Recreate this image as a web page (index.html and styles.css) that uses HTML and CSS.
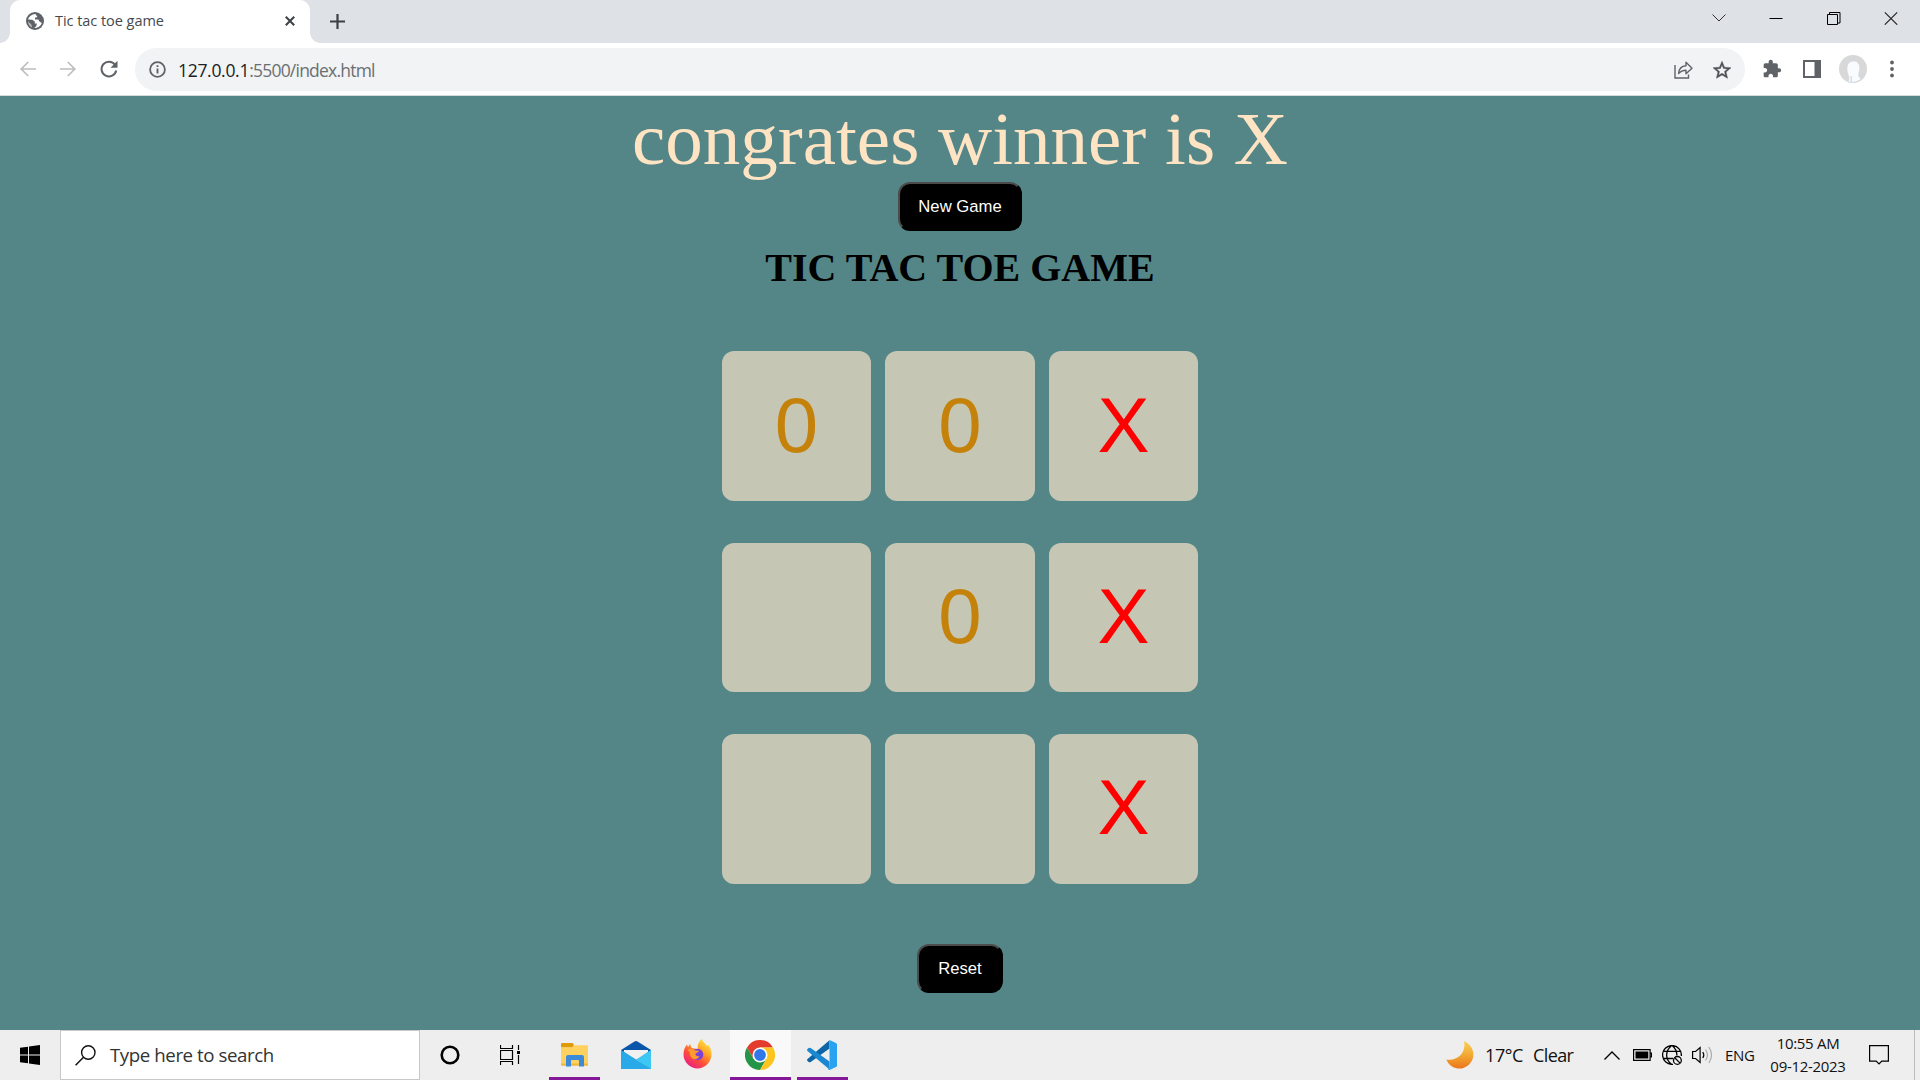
FILE: index.html
```
<!DOCTYPE html>
<html lang="en">
<head>
<meta charset="utf-8">
<title>Tic tac toe game</title>
<link rel="stylesheet" href="styles.css">
</head>
<body>
<header class="browser">
  <div class="tabstrip">
    <div class="tab">
      <svg class="globe" width="18" height="18" viewBox="0 0 18 18"><circle cx="9" cy="9" r="9" fill="#5f6368"/><path d="M9.5 1.9C5.5 2.2 2.8 4.600 2.100 7.600L6.200 7.700 8.800 9.600 8.800 11.400 10.800 11.400 10.300 14.200 8.200 16C12 16.200 14.800 13.800 15.800 11L13.400 9.600 12.300 7.600 9 7.500 8.900 5.800 11.400 4.900Z" fill="#fff"/><path d="M2 9.500L5.200 12.300 6.200 15.600C3.700 14.600 2.100 12.400 2 9.500Z" fill="#fff" opacity=".55"/></svg>
      <span class="tab-title">Tic tac toe game</span>
      <svg class="tab-close" width="10" height="10" viewBox="0 0 10 10"><path d="M.8.8l8.400 8.400M9.200.8L.8 9.200" stroke="#3c4043" stroke-width="2"/></svg>
    </div>
    <svg class="newtab" width="15" height="15" viewBox="0 0 15 15"><path d="M7.500 0v15M0 7.500h15" stroke="#3c4043" stroke-width="2.200"/></svg>
    <div class="window-controls">
      <svg width="14" height="14" viewBox="0 0 14 14"><path d="M.5 3.500l6.500 6.500 6.500-6.500" fill="none" stroke="#333"/></svg>
      <svg width="14" height="14" viewBox="0 0 14 14"><path d="M.5 7.500h13" stroke="#000"/></svg>
      <svg width="14" height="14" viewBox="0 0 14 14"><path d="M.5 3.500h10v10h-10zM2.500 3V1.500h10.500v10.500h-2" fill="none" stroke="#000"/></svg>
      <svg width="14" height="14" viewBox="0 0 14 14"><path d="M.8 1.300l12.400 12.400M13.200 1.300L.8 13.700" stroke="#222" stroke-width="1.100"/></svg>
    </div>
  </div>
  <div class="toolbar">
    <nav class="nav">
      <svg width="16" height="16" viewBox="0 0 16 16"><path d="M16 8H1.500M8.200 1L1.200 8l7 7" fill="none" stroke="#bbbdbf" stroke-width="1.700"/></svg>
      <svg width="16" height="16" viewBox="0 0 16 16"><path d="M0 8h14.500M7.800 1l7 7-7 7" fill="none" stroke="#bbbdbf" stroke-width="1.700"/></svg>
      <svg width="18" height="18" viewBox="0 0 18 18"><path d="M15 4.800A7.400 7.400 0 1 0 16.200 10.500" fill="none" stroke="#5f6368" stroke-width="2"/><path d="M17.500.8v7h-7z" fill="#5f6368"/></svg>
    </nav>
    <div class="omnibox">
      <svg width="17" height="17" viewBox="0 0 17 17"><circle cx="8.500" cy="8.500" r="7.400" fill="none" stroke="#5f6368" stroke-width="1.800"/><path d="M8.500 7.400v5M8.500 4.200v1.900" stroke="#5f6368" stroke-width="1.900"/></svg>
      <span class="url"><span class="host">127.0.0.1</span>:5500/index.html</span>
      <svg class="share" width="19" height="18" viewBox="0 0 19 18"><path d="M1 4v13h13.500v-3.500" fill="none" stroke="#5f6368" stroke-width="1.400"/><path d="M4.600 12.500C5 7.500 8 5 12 4.800V1.200l6 6-6 5.500V9.200C9 9.200 6.800 10 4.600 12.500Z" fill="none" stroke="#5f6368" stroke-width="1.400" stroke-linejoin="round"/></svg>
      <svg class="star" width="18" height="18" viewBox="0 0 24 24"><path d="M22 9.240l-7.190-.62L12 2 9.190 8.630 2 9.240l5.460 4.730L5.820 21 12 17.270 18.180 21l-1.630-7.030L22 9.240zM12 15.400l-3.760 2.270 1-4.280-3.320-2.880 4.380-.38L12 6.100l1.710 4.040 4.380.38-3.320 2.880 1 4.280L12 15.400z" fill="#4d5155" stroke="#4d5155" stroke-width=".5" transform="translate(-2.400 -2.100) scale(1.200)"/></svg>
    </div>
    <div class="actions">
      <svg width="20" height="20" viewBox="0 0 24 24"><path d="M20.500 11H19V7c0-1.100-.9-2-2-2h-4V3.500C13 2.120 11.880 1 10.500 1S8 2.120 8 3.500V5H4c-1.100 0-1.990.9-1.990 2v3.800H3.500c1.490 0 2.700 1.210 2.700 2.700s-1.210 2.700-2.700 2.700H2V20c0 1.100.9 2 2 2h3.800v-1.500c0-1.490 1.210-2.700 2.700-2.700 1.490 0 2.700 1.210 2.700 2.700V22H17c1.100 0 2-.9 2-2v-4h1.500c1.380 0 2.500-1.120 2.500-2.500S21.880 11 20.500 11z" fill="#5f6368"/></svg>
      <svg width="18" height="18" viewBox="0 0 18 18"><path d="M0 0h18v18H0zM2 2v14h9.500V2z" fill="#5f6368" fill-rule="evenodd"/></svg>
      <svg width="28" height="28" viewBox="0 0 28 28"><circle cx="14" cy="14" r="14" fill="#d8d8d8"/><path d="M9 27c1.500-2 .8-5.500-.2-8C6.500 12 8.500 6 14.500 6S22 12 20 18c-.8 2.500 0 4 2 6-3 3-8 4-13 3z" fill="#f9fbfd" stroke="#c7d2dd" stroke-width=".6"/><path d="M12.200 21v6" stroke="#b9cbdc" stroke-width=".8"/></svg>
      <svg width="4" height="18" viewBox="0 0 4 18"><g fill="#5f6368"><circle cx="2" cy="2.500" r="1.900"/><circle cx="2" cy="9" r="1.900"/><circle cx="2" cy="15.500" r="1.900"/></g></svg>
    </div>
  </div>
</header>

<main class="page">
  <p class="message">congrates winner is X</p>
  <button class="btn new-game">New Game</button>
  <h1 class="heading">TIC TAC TOE GAME</h1>
  <div class="board">
    <button class="cell o">0</button><button class="cell o">0</button><button class="cell x">X</button>
    <button class="cell"></button><button class="cell o">0</button><button class="cell x">X</button>
    <button class="cell"></button><button class="cell"></button><button class="cell x">X</button>
  </div>
  <button class="btn reset">Reset</button>
</main>

<footer class="taskbar">
  <div class="start"><svg width="20" height="20" viewBox="0 0 20 20"><path d="M0 2.800l8-1.100v7.800H0zM9 1.500L20 0v9.500H9zM0 10.500h8v7.800l-8-1.100zM9 10.500h11V20L9 18.500z"/></svg></div>
  <div class="search">
    <svg width="21" height="21" viewBox="0 0 21 21"><circle cx="13.300" cy="7.500" r="6.700" fill="none" stroke="#111" stroke-width="1.400"/><path d="M8.500 12.300L.6 20.300" stroke="#111" stroke-width="1.500"/></svg>
    <span class="search-text">Type here to search</span>
  </div>
  <div class="slot cortana"><svg width="20" height="20" viewBox="0 0 20 20"><circle cx="10" cy="10" r="8.300" fill="none" stroke="#000" stroke-width="2.600"/></svg></div>
  <div class="slot taskview"><svg width="20" height="20" viewBox="0 0 20 20"><path d="M.5 5.500h12v9H.5zM.5 0v3.500h12V0M.5 20v-3.500h12V20M18.500 0v5M18.500 10v9" fill="none" stroke="#000" stroke-width="1.200"/><path d="M17 6h3v3h-3z"/></svg></div>
  <div class="app folder"><svg width="28" height="24" viewBox="0 0 28 24"><path d="M0 1q0-1 1-1h10.500l1.500 2-1.500 2.500H0z" fill="#e09a08"/><path d="M0 4.500h11L13 2.200h13q1 0 1 1V22H0z" fill="#ffd260"/><path d="M0 20.500h27V22q0 .8-1 .8H1q-1 0-1-.8z" fill="#f0b93c"/><path d="M5 23.500V14q0-2 2-2h14q2 0 2 2v9.500h-5V18q0-1-1-1h-6q-1 0-1 1v5.500z" fill="#3c8bd9"/></svg></div>
  <div class="app mail"><svg width="30" height="28" viewBox="0 0 30 28"><path d="M0 9L13.500.5q1.500-.9 3 0L30 9v3H0z" fill="#0a56aa"/><path d="M3 9h24v8H3z" fill="#f1f1f1"/><path d="M0 9l15 10L30 9v19H0z" fill="#1b91de"/><path d="M0 9l30 19H0z" fill="#2aa9e8"/><path d="M15 19L30 9v19z" fill="#3fc7f4"/></svg></div>
  <div class="app firefox"><svg width="29" height="30" viewBox="0 0 29 30"><defs><linearGradient id="fx" x1=".9" y1="0" x2=".2" y2="1"><stop offset="0" stop-color="#fff04b"/><stop offset=".35" stop-color="#ffab28"/><stop offset=".65" stop-color="#ff4f38"/><stop offset="1" stop-color="#e6198f"/></linearGradient></defs><path d="M15 10c-1-4 1-8 4-10 .5 3 3 4 5 7l1.500-1c2 3 3 6 3 9.500C28.500 23 22 29.500 14.500 29.500S.5 23 .5 15.500C.5 11 2 8 4 5.500l1 2.500 2-3 1.500 4z" fill="url(#fx)"/><circle cx="14.500" cy="15.500" r="5.800" fill="#7a42d8"/><path d="M4.500 11c3-2 5.500-1 7.500.5l4 .3c-.5 2-3 1.700-3.500 3-.4 1.500 1.500 3 4 2.200-1 3.500-6 4.500-8.500 1-1.500-2-.8-4-1.500-5z" fill="#ff9a2f"/></svg></div>
  <div class="app chrome"><svg width="30" height="30" viewBox="0 0 30 30"><path d="M2 7.500A15 15 0 0 1 28 7.500H15L8.500 18.750z" fill="#e33b2e"/><path d="M2 7.500A15 15 0 0 0 15 30L21.500 18.750H8.500z" fill="#249447"/><path d="M28 7.500A15 15 0 0 1 15 30l6.500-11.250L15 7.500z" fill="#fcc41f"/><circle cx="15" cy="15" r="7.500" fill="#fff"/><circle cx="15" cy="15" r="5.900" fill="#3177e8"/></svg></div>
  <div class="app vscode"><svg width="30" height="30" viewBox="0 0 30 30"><path d="M.5 19q-1 1 .2 2.200l1 .8q1 .6 2 0L22.500 8.500V.3z" fill="#0b65a6"/><path d="M.5 11q-1-1 .2-2.200l1-.8q1-.6 2 0L22.500 21.500v8z" fill="#1988d0"/><path d="M22.500 0L29 3q1 .5 1 1.500v21q0 1-1 1.500l-6.500 3q-1-.2-1.500-1l1.500-2z" fill="#29a3ef"/></svg></div>
  <div class="weather">
    <svg width="28" height="28" viewBox="0 0 28 28"><defs><linearGradient id="mn" x1="0" y1="0" x2="0" y2="1"><stop offset="0" stop-color="#f8cf58"/><stop offset=".5" stop-color="#f2a934"/><stop offset="1" stop-color="#ec751c"/></linearGradient></defs><path d="M18 .3A14 14 0 1 1 .3 18.500C12 20.500 20.500 11 18 .3z" fill="url(#mn)"/></svg>
    <span class="temp">17°C</span><span class="sky">Clear</span>
  </div>
  <div class="tray">
    <svg width="16" height="9" viewBox="0 0 16 9"><path d="M.5 8.500L8 1l7.500 7.500" fill="none" stroke="#000" stroke-width="1.300"/></svg>
    <svg class="battery" width="19" height="12" viewBox="0 0 19 12"><path d="M.6.6h16.500v10.800H.6zM17.500 4h1v4h-1" fill="none" stroke="#000" stroke-width="1.200"/><path d="M2.500 2.500h12.800v7H2.500z"/></svg>
    <svg class="net" width="20" height="20" viewBox="0 0 20 20"><g fill="none" stroke="#000" stroke-width="1.300"><path d="M11 19.300A9.400 9.400 0 1 1 19.300 11M1.500 6.300h17M1 13.500h10M9.500.7c-6.500 5-6.500 13.500 0 18.500M10.500.7c3 2.800 4.600 6 4.300 9.800"/><circle cx="15.400" cy="15.400" r="3.900"/><path d="M12.700 12.700l5.400 5.400"/></g></svg>
    <svg class="volume" width="21" height="18" viewBox="0 0 21 18"><path d="M.6 5.500h3l4.500-4v15l-4.500-4h-3z" fill="none" stroke="#000" stroke-width="1.200"/><path d="M10.800 6q2 3 0 6" fill="none" stroke="#000" stroke-width="1.200"/><path d="M13.500 3.500q4 5.500 0 11M16.800 1q5.500 8 0 16" fill="none" stroke="#aaa" stroke-width="1.200"/></svg>
    <span class="lang">ENG</span>
    <div class="clock"><span class="time">10:55 AM</span><span class="date">09-12-2023</span></div>
    <svg class="notify" width="20" height="20" viewBox="0 0 20 20"><path d="M.6.6h18.800v15.500h-6.600L10 19l-2.800-2.900H.6z" fill="none" stroke="#000" stroke-width="1.200"/></svg>
    <span class="desktop-edge"></span>
  </div>
</footer>
</body>
</html>
```
FILE: styles.css
```
* { box-sizing: border-box; }
body {
  margin: 0;
  width: 1920px;
  height: 1080px;
  overflow: hidden;
  display: flex;
  flex-direction: column;
  font-family: "Open Sans", "Noto Sans", sans-serif;
}
svg { display: block; flex: none; }
span { white-space: nowrap; }

/* Browser chrome */
.browser { flex: none; height: 96px; background: #fff; border-bottom: 1px solid #d5dbdc; }
.tabstrip {
  height: 43px;
  display: flex;
  align-items: center;
  background: #dee1e6;
  padding-left: 10px;
}
.tab {
  position: relative;
  width: 300px;
  height: 43px;
  padding: 0 15px 1px 16px;
  display: flex;
  align-items: center;
  background: #fff;
  border-radius: 10px 10px 0 0;
}
.tab::before, .tab::after {
  content: "";
  position: absolute;
  bottom: 0;
  width: 10px;
  height: 10px;
}
.tab::before { left: -10px; background: radial-gradient(circle at 0 0, #dee1e6 9.500px, #fff 10px); }
.tab::after { right: -10px; background: radial-gradient(circle at 100% 0, #dee1e6 9.500px, #fff 10px); }
.tab-title { margin-left: 11px; padding-bottom: 1px; font-size: 14.500px; letter-spacing: -0.040px; color: #45494d; }
.tab-close { margin-left: auto; }
.newtab { margin-left: 20px; }
.window-controls { margin-left: auto; display: flex; gap: 43.300px; padding: 0 22px 7px 0; }

.toolbar { height: 52px; display: flex; align-items: center; }
.nav { display: flex; align-items: center; gap: 24px; width: 135px; padding-left: 19.500px; }
.omnibox {
  width: 1610px;
  height: 43px;
  display: flex;
  align-items: center;
  margin-top: 1px;
  padding: 0 14px;
  border-radius: 22px;
  background: #f1f3f4;
}
.url { margin-left: 12px; font-size: 17.500px; letter-spacing: -0.780px; color: #6b6f73; }
.host { letter-spacing: -0.300px; color: #202124; }
.share { margin-left: auto; }
.star { margin-left: 20px; }
.actions { display: flex; align-items: center; padding-left: 17px; }
.actions svg:nth-child(2) { margin-left: 21px; }
.actions svg:nth-child(3) { margin-left: 18px; }
.actions svg:nth-child(4) { margin-left: 23px; }

/* Game page */
.page {
  flex: 1;
  background: #548687;
  display: flex;
  flex-direction: column;
  align-items: center;
  font-family: "Liberation Serif", "Times New Roman", serif;
}
.message { margin: 0; height: 86px; line-height: 85px; font-size: 75px; color: #ffe4c4; white-space: nowrap; }
.btn {
  flex: none;
  height: 49px;
  padding: 0 18px;
  border: 2px outset #000;
  border-color: #4c4c4c #000 #000 #4c4c4c;
  border-radius: 12px;
  background: #000;
  color: #fff;
  font: 16.670px "Liberation Sans", Arial, sans-serif;
}
.heading { margin: 14px 0 0; height: 46px; line-height: 46px; font-size: 40px; font-weight: bold; color: #000; }
.board {
  margin-top: 60.300px;
  display: grid;
  grid-template-columns: repeat(3, 149.440px);
  grid-auto-rows: 149.440px;
  gap: 42px 14px;
}
.cell {
  padding: 0 0 2px;
  border: 0;
  border-radius: 12px;
  background: #c6c6b4;
  font: 78px "Liberation Sans", Arial, sans-serif;
}
.cell.o { color: #c4820a; }
.cell.x { color: #f00; }
.reset { margin-top: 60.700px; padding: 0 18.900px; }

/* Taskbar */
.taskbar { flex: none; height: 50px; display: flex; align-items: center; background: #eee; color: #111; }
.start { width: 60px; padding-left: 20px; }
.search {
  width: 360px;
  height: 50px;
  display: flex;
  align-items: center;
  padding-left: 14px;
  border: 1px solid #c8c8c8;
  background: #fff;
}
.search-text { margin-left: 14px; padding-bottom: 2px; font-size: 18.700px; letter-spacing: -0.430px; color: #333; }
.slot { display: flex; justify-content: center; width: 60px; }
.app {
  height: 50px;
  width: 51px;
  display: flex;
  align-items: center;
  justify-content: center;
  border-bottom: 3px solid transparent;
  padding-top: 3px;
}
.folder, .chrome, .vscode { border-bottom-color: #851799; }
.folder { margin-left: 9px; padding-top: 2px; }
.mail { margin-left: 10px; }
.firefox { margin-left: 11px; padding-top: 0; }
.chrome { margin-left: 7px; width: 61px; padding-right: 1px; background: #f9f9f9; }
.vscode { margin-left: 6px; padding-right: 1px; }
.weather { margin-left: 598px; display: flex; align-items: center; font-size: 18px; }
.temp { margin-left: 11px; width: 48px; letter-spacing: -0.400px; }
.sky { width: 71px; letter-spacing: -0.600px; }
.temp, .sky { padding-bottom: 1px; }
.tray { flex: 1; display: flex; align-items: center; height: 50px; }
.battery { margin-left: 13px; }
.net { margin-left: 10px; }
.volume { margin-left: 10px; }
.lang { width: 32px; margin-left: 12px; font-size: 15px; letter-spacing: -0.300px; }
.clock { width: 101px; padding-left: 1px; display: flex; flex-direction: column; align-items: center; font-size: 15px; line-height: 23px; letter-spacing: -0.300px; }
.notify { margin-left: 11px; }
.desktop-edge { margin-left: auto; width: 6px; height: 50px; border-left: 1px solid #bbb; }
```
